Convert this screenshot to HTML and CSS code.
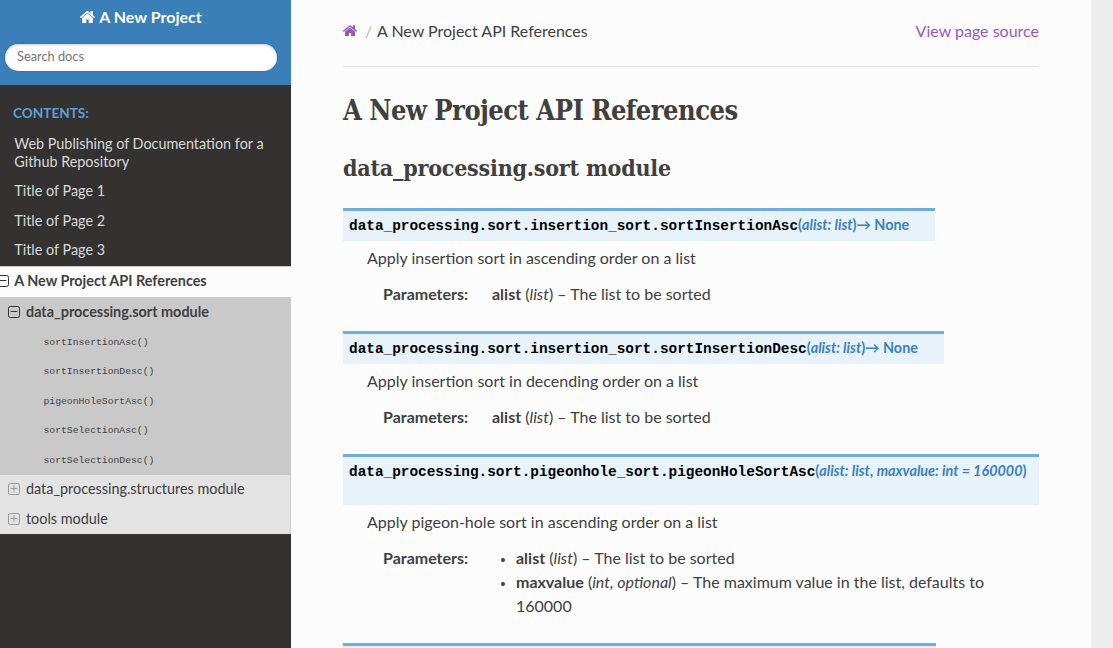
FILE: index.html
```html
<!DOCTYPE html>
<html lang="en">
<head>
<meta charset="utf-8">
<title>A New Project API References</title>
<link rel="stylesheet" href="styles.css">
</head>
<body>
<svg class="defs" width="0" height="0">
  <symbol id="home" viewBox="24 253 1616 1283"><path fill="currentColor" d="M1408 992v480q0 26-19 45t-45 19h-384v-384h-256v384h-384q-26 0-45-19t-19-45v-480q0-1 .5-3t.5-3l575-474 575 474q1 2 1 6zm223-69l-62 74q-8 9-21 11h-3q-13 0-21-7l-692-577-692 577q-12 8-24 7-13-2-21-11l-62-74q-8-10-7-23.5t11-21.5l719-599q32-26 76-26t76 26l244 204v-195q0-14 9-23t23-9h192q14 0 23 9t9 23v408l219 182q10 8 11 21.5t-7 23.5z"/></symbol>
  <symbol id="minus" viewBox="0 0 12 12"><rect x=".5" y=".5" width="11" height="11" rx="1.8" fill="none" stroke="currentColor"/><path d="M2.6 5.5h6.8" stroke="currentColor"/></symbol>
  <symbol id="plus" viewBox="0 0 12 12"><rect x=".5" y=".5" width="11" height="11" rx="1.8" fill="none" stroke="currentColor"/><path d="M2.6 5.5h6.8M6 2.1v6.8" stroke="currentColor"/></symbol>
</svg>
<div class="page">
  <nav class="sidebar">
    <div class="side-header">
      <a class="brand"><svg class="home"><use href="#home"/></svg>A New Project</a>
      <input class="search" type="text" placeholder="Search docs">
    </div>
    <p class="caption">Contents:</p>
    <a class="link">Web Publishing of Documentation for a Github Repository</a>
    <a class="link">Title of Page 1</a>
    <a class="link">Title of Page 2</a>
    <a class="link">Title of Page 3</a>
    <div class="current">
      <a class="link top"><svg class="toggle"><use href="#minus"/></svg>A New Project API References</a>
      <a class="link sub open"><svg class="toggle"><use href="#minus"/></svg>data_processing.sort module</a>
      <div class="functions">
        <a class="link fn">sortInsertionAsc()</a>
        <a class="link fn">sortInsertionDesc()</a>
        <a class="link fn">pigeonHoleSortAsc()</a>
        <a class="link fn">sortSelectionAsc()</a>
        <a class="link fn">sortSelectionDesc()</a>
      </div>
      <a class="link sub"><svg class="toggle"><use href="#plus"/></svg>data_processing.structures module</a>
      <a class="link sub"><svg class="toggle"><use href="#plus"/></svg>tools module</a>
    </div>
  </nav>
  <main class="content">
    <div class="crumbs">
      <div class="trail"><svg class="home"><use href="#home"/></svg><span class="slash">/</span><span>A New Project API References</span></div>
      <a class="source">View page source</a>
    </div>
    <h1>A New Project API References</h1>
    <h2>data_processing.sort module</h2>

    <section class="entry">
      <div class="sig"><code>data_processing.sort.insertion_sort.sortInsertionAsc</code><span>(<em>alist: list</em>)→ None</span></div>
      <p class="desc">Apply insertion sort in ascending order on a list</p>
      <div class="params"><b>Parameters:</b><div><b>alist</b> (<em>list</em>) – The list to be sorted</div></div>
    </section>
    <section class="entry">
      <div class="sig"><code>data_processing.sort.insertion_sort.sortInsertionDesc</code><span>(<em>alist: list</em>)→ None</span></div>
      <p class="desc">Apply insertion sort in decending order on a list</p>
      <div class="params"><b>Parameters:</b><div><b>alist</b> (<em>list</em>) – The list to be sorted</div></div>
    </section>
    <section class="entry">
      <div class="sig wrapped"><code>data_processing.sort.pigeonhole_sort.pigeonHoleSortAsc</code><span>(<em>alist: list</em>, <em>maxvalue: int = 160000</em>)</span></div>
      <p class="desc">Apply pigeon-hole sort in ascending order on a list</p>
      <div class="params"><b>Parameters:</b><ul>
        <li><b>alist</b> (<em>list</em>) – The list to be sorted</li>
        <li><b>maxvalue</b> (<em>int, optional</em>) – The maximum value in the list, defaults to 160000</li>
      </ul></div>
    </section>
    <section class="entry"><div class="sig cut"></div></section>
  </main>
</div>
</body>
</html>
```
FILE: styles.css
```css
* { box-sizing: border-box; }
body {
  margin: 0;
  background: #ededed;
  color: #404040;
  font: 16px/24px Lato, sans-serif;
}
.defs { display: none; }
.page { display: flex; width: 1091px; height: 648px; overflow: hidden; }

/* Sidebar */
.sidebar { flex: 0 0 291px; background: #343131; overflow: hidden; }
.side-header {
  height: 85px;
  padding: 4px 14px 0 5px;
  background: #3a7fb8;
  display: flex;
  flex-direction: column;
  align-items: center;
}
.brand { display: flex; align-items: center; gap: 4px; color: #fcfcfc; font-weight: 700; height: 25px; }
.home { width: 14px; height: 11.5px; }
.brand .home { width: 15px; height: 12px; }
.search {
  width: 272px;
  height: 27px;
  margin-top: 15px;
  padding: 0 12px 3px;
  border: 0;
  border-radius: 50px;
  background: #fff;
  box-shadow: inset 0 1px 3px #ccc, 0 0 0 1px #3577ac;
  font: 12.8px Lato, sans-serif;
}
.search::placeholder { color: #757575; }
.caption {
  margin: 12px 0 0;
  padding-left: 13px;
  height: 32px;
  font-size: 13.6px;
  font-weight: 700;
  line-height: 32px;
  text-transform: uppercase;
  color: #5c9fd6;
}
.link {
  display: block;
  padding: 5.72px 20px 5.72px 14.3px;
  font-size: 14.4px;
  line-height: 18px;
  color: #d9d9d9;
}
.current { margin-top: 1.2px; background: #e3e3e3; }
.current .link { display: flex; align-items: center; color: #404040; }
.toggle { flex: none; width: 12px; height: 12px; margin-right: 5.7px; color: #333; }
.current .top {
  height: 31px;
  padding: 0 0 2px;
  border-top: 1px solid #c9c9c9;
  background: #fcfcfc;
  font-weight: 700;
}
.top .toggle { margin-left: -3.5px; }
.current .sub { height: 29.5px; padding: 0 0 1.5px 8.3px; border-right: 1px solid #c9c9c9; }
.sub .toggle { color: #999; }
.current .open { height: 30px; padding-bottom: 0; background: #c9c9c9; font-weight: 700; }
.open .toggle { color: #333; }
.functions { padding-top: .6px; background: #c9c9c9; }
.current .fn { height: 29.5px; padding: 0 0 0 43.5px; font: 9.72px "Liberation Mono", monospace; }

/* Content */
.content { flex: 1; background: #fcfcfc; padding: 19px 52px 0; overflow: hidden; }
.crumbs {
  display: flex;
  justify-content: space-between;
  height: 48px;
  border-bottom: 1px solid #e1e4e5;
}
.trail { display: flex; height: 24px; align-items: center; }
.trail .home { color: #9b59b6; }
.slash { width: 20px; padding-left: 8px; color: #bbb; }
.source { color: #9b59b6; }
h1, h2 {
  margin: 0;
  font-family: "Roboto Slab", "DejaVu Serif Condensed", "DejaVu Serif", serif;
  font-weight: 700;
  font-stretch: condensed;
  white-space: nowrap;
}
h1 { padding-top: 25px; font-size: 27px; line-height: 38px; letter-spacing: -.5px; }
h2 { padding-top: 21px; font-size: 23px; line-height: 34px; letter-spacing: -.2px; margin-bottom: 23px; }
.entry { margin-bottom: 25px; }
.sig {
  display: flex;
  width: fit-content;
  height: 33px;
  margin-bottom: 5px;
  padding: 5px 26.2px 0 6px;
  border-top: 3px solid #70addc;
  background: #e7f2fa;
  color: #3a82bd;
  font-size: 14.4px;
  font-weight: 700;
  line-height: 18px;
  white-space: nowrap;
}
.sig code { color: #000; font: 700 14.4px/21px "Liberation Mono", monospace; }
.wrapped { width: 696px; height: 51px; }
.cut { width: 593px; }
.desc { margin: 0 0 12px 24px; }
.params { display: grid; grid-template-columns: 109px 1fr; margin-left: 40px; }
.params ul { margin: 0; padding-left: 24px; }
.params li::marker { font-size: 13px; }
```
